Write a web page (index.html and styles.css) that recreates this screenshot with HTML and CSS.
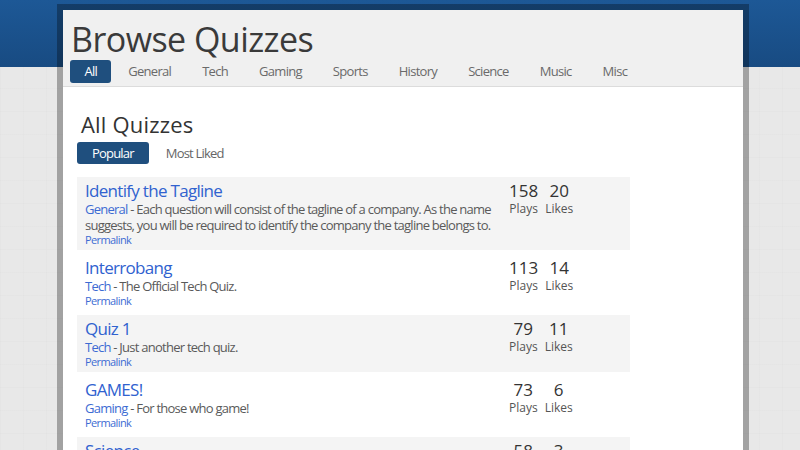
FILE: index.html
```html
<!DOCTYPE html>
<html>
<head>
<meta charset="utf-8">
<link rel="stylesheet" href="styles.css">
</head>
<body>
<div class="page">
  <div class="container">
    <div class="top">
      <h1 class="title">Browse Quizzes</h1>
      <nav class="tabs">
        <a class="tab active">All</a>
        <a class="tab">General</a>
        <a class="tab">Tech</a>
        <a class="tab">Gaming</a>
        <a class="tab">Sports</a>
        <a class="tab">History</a>
        <a class="tab">Science</a>
        <a class="tab">Music</a>
        <a class="tab">Misc</a>
      </nav>
    </div>
    <div class="main">
      <h2 class="subtitle">All Quizzes</h2>
      <div class="pills">
        <a class="pill active">Popular</a>
        <a class="pill">Most Liked</a>
      </div>
      <ul class="list">
        <li class="item">
          <div class="info">
            <a class="name">Identify the Tagline</a>
            <p class="desc"><a class="cat">General</a> - Each question will consist of the tagline of a company. As the name suggests, you will be required to identify the company the tagline belongs to.</p>
            <a class="perma">Permalink</a>
          </div>
          <div class="stats">
            <div class="stat plays"><span class="num">158</span><span class="lbl">Plays</span></div>
            <div class="stat likes"><span class="num">20</span><span class="lbl">Likes</span></div>
          </div>
        </li>
        <li class="item">
          <div class="info">
            <a class="name">Interrobang</a>
            <p class="desc"><a class="cat">Tech</a> - The Official Tech Quiz.</p>
            <a class="perma">Permalink</a>
          </div>
          <div class="stats">
            <div class="stat plays"><span class="num">113</span><span class="lbl">Plays</span></div>
            <div class="stat likes"><span class="num">14</span><span class="lbl">Likes</span></div>
          </div>
        </li>
        <li class="item">
          <div class="info">
            <a class="name">Quiz 1</a>
            <p class="desc"><a class="cat">Tech</a> - Just another tech quiz.</p>
            <a class="perma">Permalink</a>
          </div>
          <div class="stats">
            <div class="stat plays"><span class="num">79</span><span class="lbl">Plays</span></div>
            <div class="stat likes"><span class="num">11</span><span class="lbl">Likes</span></div>
          </div>
        </li>
        <li class="item">
          <div class="info">
            <a class="name">GAMES!</a>
            <p class="desc"><a class="cat">Gaming</a> - For those who game!</p>
            <a class="perma">Permalink</a>
          </div>
          <div class="stats">
            <div class="stat plays"><span class="num">73</span><span class="lbl">Plays</span></div>
            <div class="stat likes"><span class="num">6</span><span class="lbl">Likes</span></div>
          </div>
        </li>
        <li class="item">
          <div class="info">
            <a class="name">Science</a>
            <p class="desc"><a class="cat">Science</a> - A quiz about science.</p>
            <a class="perma">Permalink</a>
          </div>
          <div class="stats">
            <div class="stat plays"><span class="num">58</span><span class="lbl">Plays</span></div>
            <div class="stat likes"><span class="num">3</span><span class="lbl">Likes</span></div>
          </div>
        </li>
      </ul>
    </div>
  </div>
</div>
</body>
</html>
```
FILE: styles.css
```css
html, body {
  margin: 0;
  padding: 0;
}
body {
  font-family: "Open Sans", "DejaVu Sans", sans-serif;
  background:
    linear-gradient(#1d5896, #184b82) top left / 100% 67px no-repeat,
    repeating-linear-gradient(90deg, rgba(0, 0, 0, 0.01) 0 1px, transparent 1px 23px),
    repeating-linear-gradient(0deg, rgba(0, 0, 0, 0.01) 0 1px, transparent 1px 23px),
    #e8e8e8;
  min-height: 450px;
  overflow: hidden;
}
.page {
  padding: 4px 0 0 57px;
}
.container {
  width: 680px;
  border: 6px solid rgba(0, 0, 0, 0.3);
  border-bottom: 0;
  background: #fff;
  background-clip: padding-box;
  min-height: 700px;
}
.top {
  background: #f0f0f0;
  border-bottom: 1px solid #dcdcdc;
  padding: 9px 7px 3px;
}
.title {
  margin: 0 0 1px 1px;
  font-size: 34px;
  line-height: 40px;
  font-weight: 400;
  letter-spacing: -0.55px;
  color: #3a3a3a;
}
.tabs {
  display: flex;
  gap: 3px;
}
.tab {
  display: block;
  height: 23px;
  line-height: 23px;
  padding: 0 14px;
  font-size: 13px;
  letter-spacing: -0.7px;
  color: #6a6a6a;
  border-radius: 3px;
}
.tab.active {
  background: #1f4f7e;
  color: #fff;
  padding: 0 14px 0 14.5px;
}
.main {
  padding: 22px 14px 0;
}
.subtitle {
  margin: 0 0 3px 4px;
  font-size: 22px;
  line-height: 30px;
  font-weight: 400;
  letter-spacing: 0.2px;
  color: #333;
}
.pills {
  display: flex;
  gap: 2px;
}
.pill {
  display: block;
  height: 22px;
  line-height: 22px;
  padding: 0 15px;
  font-size: 13px;
  letter-spacing: -0.8px;
  color: #666;
  border-radius: 3px;
}
.pill.active {
  background: #1f4f7e;
  color: #fff;
}
.list {
  list-style: none;
  margin: 13px 0 0;
  padding: 0;
  width: 553px;
}
.item {
  display: flex;
  gap: 6px;
  padding: 4px 8px 3px;
  margin-bottom: 4px;
}
.item:nth-child(odd) {
  background: #f4f4f4;
}
.info {
  flex: 0 0 418px;
  display: flex;
  flex-direction: column;
  align-items: flex-start;
}
.name {
  font-size: 17px;
  line-height: 20px;
  letter-spacing: -0.7px;
  color: #3062cf;
}
.desc {
  margin: 0;
  font-size: 13px;
  line-height: 16px;
  letter-spacing: -0.75px;
  color: #5a5a5a;
}
.cat {
  color: #3d6bd3;
}
.perma {
  font-size: 11px;
  line-height: 14px;
  letter-spacing: -0.6px;
  color: #3d6bd3;
}
.stats {
  display: flex;
  gap: 7px;
}
.stat {
  display: flex;
  flex-direction: column;
  align-items: center;
}
.num {
  font-size: 17px;
  line-height: 20px;
  color: #333;
}
.lbl {
  font-size: 12px;
  line-height: 16px;
  color: #555;
}
```
